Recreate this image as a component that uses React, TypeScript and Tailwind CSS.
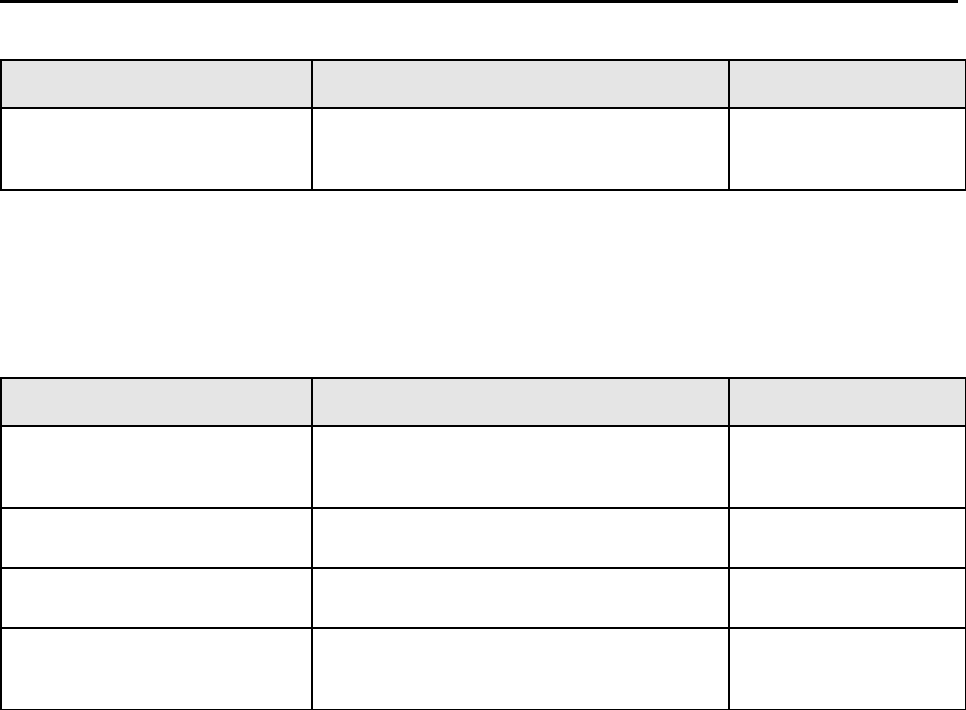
import React from "react";

function Table({ rows }: { rows: number[] }) {
  return (
    <table className="border-collapse w-[965px] table-fixed">
      <colgroup>
        <col className="w-[311px]" />
        <col className="w-[417px]" />
        <col className="w-[237px]" />
      </colgroup>
      <thead>
        <tr className="h-[48px] bg-[#e5e5e5]">
          <th className="border-2 border-black"></th>
          <th className="border-2 border-black"></th>
          <th className="border-2 border-black"></th>
        </tr>
      </thead>
      <tbody>
        {rows.map((h, i) => (
          <tr key={i} style={{ height: h }}>
            <td className="border-2 border-black"></td>
            <td className="border-2 border-black"></td>
            <td className="border-2 border-black"></td>
          </tr>
        ))}
      </tbody>
    </table>
  );
}

export default function App() {
  return (
    <div className="bg-white w-[966px] h-[710px] overflow-hidden font-['Liberation_Sans',sans-serif]">
      <div className="h-[3px] w-[958px] bg-black" />
      <div className="mt-[56px]">
        <Table rows={[82]} />
      </div>
      <div className="mt-[186px]">
        <Table rows={[82, 60, 60, 82]} />
      </div>
    </div>
  );
}
